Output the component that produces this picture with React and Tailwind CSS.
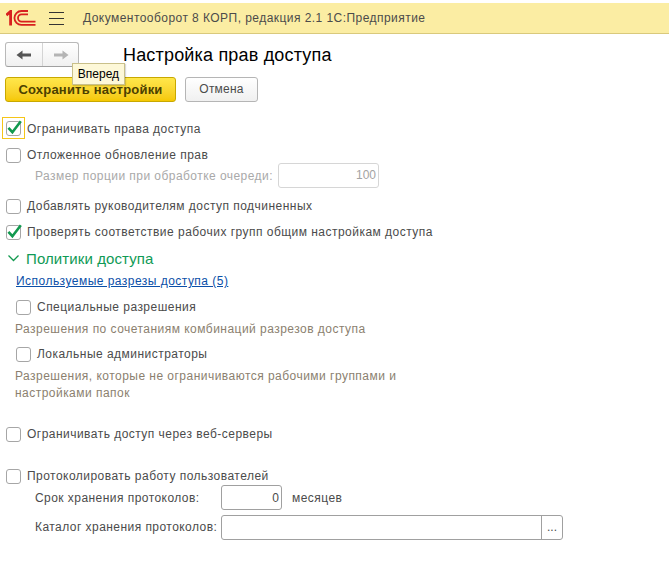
import React from "react";

const font = { fontFamily: '"Liberation Sans", Arial, sans-serif' };

function Check({ checked }) {
  return (
    <span className="relative block w-[15px] h-[15px] shrink-0 rounded-[3px] border border-[#a6a6a6] bg-white">
      {checked && (
        <svg className="absolute left-[-1px] top-[-1px] overflow-visible" width="16" height="15" viewBox="0 0 16 15" fill="none">
          <path d="M2.4 6.8 L6.4 11.2 L14.8 0.2" stroke="#12994f" strokeWidth="2.6" />
        </svg>
      )}
    </span>
  );
}

function CheckRow({ checked, label, className = "", h = "h-5" }) {
  return (
    <div className={`flex items-center ${h} ${className}`}>
      <Check checked={checked} />
      <span className="ml-[6px] text-[#4b4b4b] tracking-[0.47px] whitespace-nowrap">{label}</span>
    </div>
  );
}

function Logo() {
  return (
    <svg width="30" height="16" viewBox="0 0 30 16" fill="none" className="shrink-0">
      <path d="M0.3 5.2 L4.6 1.4 V15.5" stroke="#d8201f" strokeWidth="2.8" />
      <path d="M22 1 H15.4 A6.6 6.6 0 0 0 15.4 14.9 H29.5" stroke="#d8201f" strokeWidth="1.8" />
      <path d="M22 4.4 H15.6 A3.3 3.3 0 0 0 15.6 11.6 H29.5" stroke="#d8201f" strokeWidth="1.8" />
    </svg>
  );
}

export default function App() {
  return (
    <div className="relative w-[669px] h-[566px] overflow-hidden bg-white text-[12px] leading-[17px]" style={font}>
      <div className="mt-[3px] h-[31px] bg-[#fbeda3] border-b border-[#d9c97c] flex items-center pl-[6px]">
        <Logo />
        <span className="ml-[13px] flex flex-col gap-[5px] w-[15px]">
          <span className="block h-px bg-[#333333]" />
          <span className="block h-px bg-[#333333]" />
          <span className="block h-px bg-[#333333]" />
        </span>
        <span className="ml-[19px] text-[#4b4b4b] whitespace-nowrap tracking-[0.45px]">
          Документооборот 8 КОРП, редакция 2.1 1С:Предприятие
        </span>
      </div>

      <div className="mt-[8px] ml-[5px] flex items-center h-[25px]">
        <div className="flex h-[25px] w-[74px] rounded-[3px] border border-[#b9b9b9] border-b-[#a0a0a0] bg-gradient-to-b from-white to-[#f0f0f0]">
          <div className="w-[37px] flex items-center justify-center border-r border-[#d4d4d4]">
            <svg width="16" height="10" viewBox="0 0 16 10"><path d="M0.5 5 L6.5 0.5 V3.5 H15 V6.5 H6.5 V9.5 Z" fill="#555555" /></svg>
          </div>
          <div className="flex-1 flex items-center justify-center">
            <svg width="16" height="10" viewBox="0 0 16 10"><path d="M15.5 5 L9.5 0.5 V3.5 H1 V6.5 H9.5 V9.5 Z" fill="#b4b4b4" /></svg>
          </div>
        </div>
        <h1 className="ml-[44px] text-[18px] leading-[24px] text-black font-normal whitespace-nowrap tracking-[0.18px]">Настройка прав доступа</h1>
      </div>

      <div className="mt-[10px] ml-[5px] flex gap-[9px] h-[25px]">
        <button className="w-[171px] rounded-[3px] border border-[#c8a800] bg-gradient-to-b from-[#ffe74a] to-[#f5c800] text-[#4b4000] font-bold tracking-[0.2px] text-[13px]">
          Сохранить настройки
        </button>
        <button className="w-[73px] rounded-[3px] border border-[#b5b5b5] bg-gradient-to-b from-white to-[#f0f0f0] text-[#4b4b4b] tracking-[0.2px]">
          Отмена
        </button>
      </div>

      <div className="mt-[15px] ml-[2px] w-fit">
        <div className="flex items-center h-[22px]">
          <div className="w-[23px] h-[22px] border border-[#f5c518] flex items-center justify-center">
            <Check checked />
          </div>
          <span className="ml-[2px] pt-[2px] text-[#4b4b4b] tracking-[0.47px]">Ограничивать права доступа</span>
        </div>
      </div>

      <div className="ml-[6px]">
        <CheckRow h="h-[16px]" className="mt-[8px]" label="Отложенное обновление прав" />
        <div className="flex items-center h-[25px]">
          <span className="ml-[29px] w-[243px] pt-[2px] text-[#a9a9a9] tracking-[0.45px] whitespace-nowrap">Размер порции при обработке очереди:</span>
          <div className="w-[101px] h-[25px] rounded-[3px] border border-[#d6d6d6] flex items-center justify-end pr-[2px] text-[#a3a3a3]">100</div>
        </div>
        <CheckRow className="mt-[8px]" label="Добавлять руководителям доступ подчиненных" />
        <CheckRow checked className="mt-[6px]" label="Проверять соответствие рабочих групп общим настройкам доступа" />

        <div className="mt-[6px] h-5 flex items-center">
          <svg width="14" height="10" viewBox="0 0 14 10" fill="none" className="ml-[1px]">
            <path d="M1.5 2.5 L6.5 7.5 L11.5 2.5" stroke="#12994f" strokeWidth="1.3" />
          </svg>
          <span className="ml-[5px] text-[15px] tracking-[0.1px] text-[#0f9a56]">Политики доступа</span>
        </div>

        <a className="mt-[4px] ml-[10px] block h-[18px] leading-[18px] text-[#0b4fa8] underline tracking-[0.47px] w-fit">Используемые разрезы доступа (5)</a>

        <div className="ml-[10px]">
          <CheckRow className="mt-[7px]" label="Специальные разрешения" />
          <div className="mt-[3px] h-[18px] leading-[18px] ml-[-1px] text-[#8b7f6f] tracking-[0.47px]">Разрешения по сочетаниям комбинаций разрезов доступа</div>
          <CheckRow className="mt-[6px]" label="Локальные администраторы" />
          <div className="mt-[4px] ml-[-1px] w-[390px] text-[#8b7f6f] tracking-[0.47px]">Разрешения, которые не ограничиваются рабочими группами и настройками папок</div>
        </div>

        <CheckRow className="mt-[22px]" label="Ограничивать доступ через веб-серверы" />
        <CheckRow h="h-[17px]" className="mt-[24px]" label="Протоколировать работу пользователей" />

        <div className="flex items-center h-[25px]">
          <span className="ml-[29px] w-[186px] pt-[2px] text-[#4b4b4b] tracking-[0.45px]">Срок хранения протоколов:</span>
          <div className="w-[61px] h-[25px] rounded-[3px] border border-[#a0a0a0] flex items-center justify-end pr-[2px] pt-[2px] text-[#4b4b4b]">0</div>
          <span className="ml-[10px] pt-[2px] text-[#4b4b4b] tracking-[0.45px]">месяцев</span>
        </div>
        <div className="flex items-center h-[25px] mt-[5px]">
          <span className="ml-[29px] w-[186px] text-[#4b4b4b] tracking-[0.45px] whitespace-nowrap">Каталог хранения протоколов:</span>
          <div className="w-[342px] h-[25px] rounded-[3px] border border-[#a0a0a0] flex justify-end">
            <div className="w-[21px] border-l border-[#a0a0a0] flex items-center justify-center text-[#4b4b4b]">...</div>
          </div>
        </div>
      </div>

      <div className="absolute left-[72px] top-[63px] h-[22px] w-[53px] border border-[#c9c08a] bg-[#fdf8d8] text-black flex items-center justify-center shadow-[1px_1px_1px_rgba(0,0,0,0.15)]">
        Вперед
      </div>
    </div>
  );
}
